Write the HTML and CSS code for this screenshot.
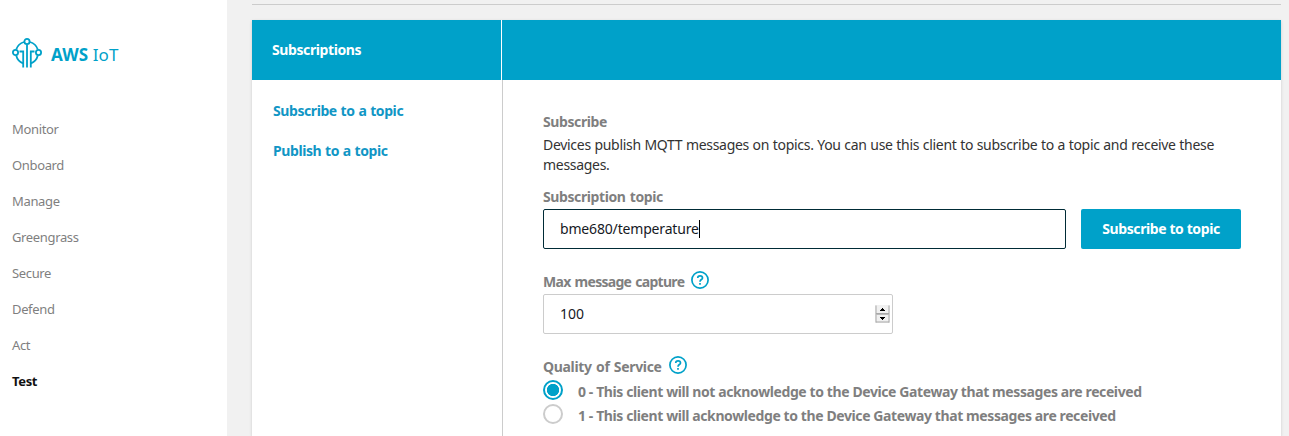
FILE: index.html
```html
<!DOCTYPE html>
<html lang="en">
<head>
<meta charset="utf-8">
<title>AWS IoT</title>
<link rel="stylesheet" href="styles.css">
</head>
<body>
<div class="app">
  <aside class="sidebar">
    <div class="brand">
      <svg class="logo" width="30" height="30" viewBox="0 0 30 30" fill="none" stroke="#00a1c9" stroke-width="1.800">
        <path d="M12 4A11.500 11.500 0 0 0 4.200 11.500M4.200 17.500A11.500 11.500 0 0 0 11 25.300M18 4A11.500 11.500 0 0 1 25.800 11.500M25.800 17.500A11.500 11.500 0 0 1 19 25.300"/>
        <circle cx="15" cy="3.500" r="2.600"/>
        <circle cx="3.500" cy="14.500" r="2.600"/>
        <circle cx="26.500" cy="14.500" r="2.600"/>
        <path d="M15 6.500V29.500M7.500 13.500H11.200V29.500M22.500 13.500H18.800V29.500"/>
      </svg>
      <span class="brand-name"><b>AWS</b> IoT</span>
    </div>
    <nav class="nav">
      <a>Monitor</a>
      <a>Onboard</a>
      <a>Manage</a>
      <a>Greengrass</a>
      <a>Secure</a>
      <a>Defend</a>
      <a>Act</a>
      <a class="active">Test</a>
    </nav>
  </aside>
  <main class="main">
    <div class="rule"></div>
    <section class="card">
      <header class="card-head">
        <div class="head-left">Subscriptions</div>
        <div class="head-right"></div>
      </header>
      <div class="card-body">
        <div class="topics">
          <a>Subscribe to a topic</a>
          <a>Publish to a topic</a>
        </div>
        <div class="form">
          <div class="label">Subscribe</div>
          <p class="desc">Devices publish MQTT messages on topics. You can use this client to subscribe to a topic and receive these<br>messages.</p>
          <div class="label topic-label">Subscription topic</div>
          <div class="topic-row">
            <div class="field focus"><span class="value">bme680/temperature</span><span class="caret"></span></div>
            <button class="btn">Subscribe to topic</button>
          </div>
          <div class="label help-label max">Max message capture
            <svg class="help" width="18" height="18" viewBox="0 0 18 18" fill="none" stroke="#00a1c9" stroke-width="1.700"><circle cx="9" cy="9" r="8.100"/><path d="M6.700 6.900C6.700 4.100 11.500 4.100 11.500 6.900C11.500 8.600 9 8.500 9 10.700M9 12V13.700"/></svg>
          </div>
          <div class="field number"><span>100</span>
            <svg class="spin" width="15" height="18" viewBox="0 0 15 18"><path fill="#f0f0f0" d="M0 0H15V18H0z"/><path fill="none" stroke="#a8a8a8" d="M1 .5V17.500M14 .5V17.500M1 8.500H14M1 17H14"/><path stroke="#bbb" d="M1 9.500H14"/><path fill="#000" d="M5 6H10V5H9V4H8V3H7V4H6V5H5zM5 12H10V13H9V14H8V15H7V14H6V13H5z"/></svg>
          </div>
          <div class="label help-label qos">Quality of Service
            <svg class="help" width="18" height="18" viewBox="0 0 18 18" fill="none" stroke="#00a1c9" stroke-width="1.700"><circle cx="9" cy="9" r="8.100"/><path d="M6.700 6.900C6.700 4.100 11.500 4.100 11.500 6.900C11.500 8.600 9 8.500 9 10.700M9 12V13.700"/></svg>
          </div>
          <div class="radio"><i class="dot on"></i><span>0 - This client will not acknowledge to the Device Gateway that messages are received</span></div>
          <div class="radio"><i class="dot"></i><span>1 - This client will acknowledge to the Device Gateway that messages are received</span></div>
        </div>
      </div>
    </section>
  </main>
</div>
</body>
</html>
```
FILE: styles.css
```css
* { box-sizing: border-box; }
body { margin: 0; background: #f1f1f1; font: 14px/20px "Noto Sans", sans-serif; color: #333; white-space: nowrap; }
.app { display: flex; height: 436px; }
.sidebar { width: 227px; background: #fff; padding: 38px 12px 0; }
.brand { display: flex; align-items: center; gap: 9px; height: 30px; color: #00a1c9; font-size: 17px; }
.brand-name { padding-top: 4px; letter-spacing: 0.1px; }
.nav { display: flex; flex-direction: column; padding-top: 43px; }
.nav a { height: 36px; line-height: 36px; font-size: 13px; letter-spacing: -0.35px; color: #7f7f7f; }
.nav .active { color: #111; font-weight: 700; }
.main { display: flex; flex-direction: column; flex: 1; padding: 4px 8px 0 25px; }
.rule { height: 1px; background: #ccc; margin-bottom: 15px; }
.card { flex: 1; background: #fff; box-shadow: 0 1px 3px rgba(0,0,0,.15); }
.card-head { display: flex; height: 60px; background: #00a1c9; color: #fff; font-weight: 700; line-height: 60px; letter-spacing: -0.4px; }
.head-left { width: 250px; padding-left: 20px; border-right: 1px solid #fff; }
.card-body { display: flex; height: 356px; }
.topics { display: flex; flex-direction: column; gap: 20px; width: 251px; padding: 21px 21px 0; border-right: 1px solid #ccc; color: #1196c5; font-weight: 700; letter-spacing: -0.42px; word-spacing: 0.6px; }
.form { flex: 1; padding: 32px 40px 0; }
.label { font-weight: 700; color: #7f7f7f; letter-spacing: -0.4px; word-spacing: 1px; }
.desc { margin: 3px 0 12px; letter-spacing: -0.3px; word-spacing: 0.3px; }
.topic-label { margin-bottom: 2px; }
.topic-row { display: flex; gap: 15px; }
.field { display: flex; align-items: center; height: 40px; padding-left: 16px; border: 1px solid #ccc; border-radius: 2px; color: #16191f; background: #fff; }
.focus { width: 523px; border-color: #002b36; }
.value { letter-spacing: -0.17px; }
.caret { width: 1px; height: 18px; background: #000; }
.btn { width: 160px; height: 40px; padding: 0; border: 0; border-radius: 2px; background: #00a1c9; color: #fff; font: 700 14px/20px "Noto Sans", sans-serif; letter-spacing: -0.4px; }
.help-label { display: flex; gap: 7px; height: 20px; margin-top: 23px; margin-bottom: 2px; }
.help { margin-top: -1px; }
.max { letter-spacing: -0.7px; }
.number { width: 350px; justify-content: space-between; padding-right: 2px; }
.qos { margin-bottom: 3px; letter-spacing: -0.33px; }
.radio { display: flex; height: 24px; gap: 15px; font-weight: 700; color: #7f7f7f; letter-spacing: -0.4px; }
.radio span { line-height: 24px; }
.dot { width: 20px; height: 20px; border: 2px solid #ccc; border-radius: 50%; background: #fff; }
.dot.on { border-color: #00a1c9; background: radial-gradient(circle, #00a1c9 5.800px, #fff 6.500px); }
```
